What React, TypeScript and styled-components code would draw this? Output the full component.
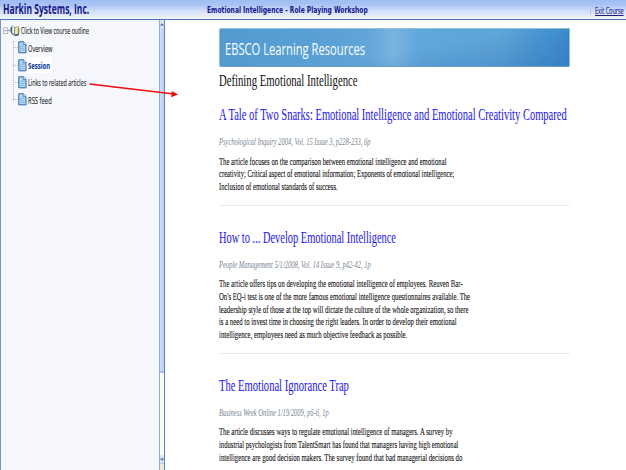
import React, { useLayoutEffect, useRef, useState } from "react";
import styled, { createGlobalStyle } from "styled-components";

const GlobalStyle = createGlobalStyle`
  * { box-sizing: border-box; }
  body { margin: 0; overflow: hidden; background: #fff; }
  h1, h2, h3, p, ul { margin: 0; padding: 0; font-weight: normal; list-style: none; }
`;

const FitBox = styled.span<{ $width: number }>`
  display: block;
  width: ${(p) => p.$width}px;
  white-space: nowrap;
`;

const FitText = styled.span<{ $underline?: boolean }>`
  display: inline-block;
  transform-origin: 0 50%;
  text-decoration: ${(p) => (p.$underline ? "underline" : "none")};
`;

/* Condenses one line of text to the given width. */
function Fit({ width, underline, children }: { width: number; underline?: boolean; children: string }) {
  const ref = useRef<HTMLSpanElement>(null);
  const [scale, setScale] = useState(1);
  useLayoutEffect(() => {
    if (ref.current) setScale(width / ref.current.offsetWidth);
  }, [width, children]);
  return (
    <FitBox $width={width}>
      <FitText ref={ref} $underline={underline} style={{ transform: `scaleX(${scale})` }}>{children}</FitText>
    </FitBox>
  );
}

const Page = styled.div`
  position: relative;
  display: flex;
  flex-direction: column;
  width: 626px;
  height: 470px;
  overflow: hidden;
  background: #fff;
`;

const Header = styled.header`
  display: flex;
  flex: none;
  height: 20px;
  border-bottom: 1px solid #4676b8;
  background: linear-gradient(#9fbcf3 0, #a9c3f4 25%, #d3e0f8 60%, #f1f5fb 100%);
`;

const Company = styled.h1`
  width: 207px;
  padding-left: 2.5px;
  font: bold 13.5px/18px "Open Sans", sans-serif;
  color: #16168c;
`;

const CourseName = styled.div`
  flex: 1;
  font: bold 8.6px/21px "DejaVu Sans", sans-serif;
  color: #16168c;
`;

const ExitArea = styled.div`
  width: 36px;
  height: 12px;
  margin-top: 3px;
  padding-left: 4px;
  border-left: 1px solid #a9cdec;
  font: 8.5px/16px "Open Sans", sans-serif;
  color: #1c1c8c;
  -webkit-text-stroke: 0.15px #1c1c8c;
`;

const Body = styled.div`
  display: flex;
  flex: 1;
  min-height: 0;
`;

const Sidebar = styled.nav`
  width: 159px;
  padding: 2px 0 0 2px;
  border-left: 1px solid #6f96d2;
  background: #f5f7fc;
`;

const Root = styled.div`
  display: flex;
  align-items: center;
  height: 17px;
  font: 8.5px/18px "Open Sans", sans-serif;
  color: #222;
  -webkit-text-stroke: 0.1px #222;
`;

const RootLabel = styled.div`
  margin-left: 1px;
  padding-top: 1px;
`;

const Branches = styled.ul`
  position: relative;
  margin-left: 10px;
  &::before {
    content: "";
    position: absolute;
    left: 0;
    top: 2px;
    height: 60px;
    border-left: 1px dotted #b9bbc0;
  }
`;

const Branch = styled.li<{ $active?: boolean }>`
  display: flex;
  align-items: center;
  height: 17.4px;
  font: ${(p) => (p.$active ? "bold " : "")}8.5px/14px "Open Sans", sans-serif;
  color: ${(p) => (p.$active ? "#173f9c" : "#222")};
  -webkit-text-stroke: 0.1px currentColor;
  &::before {
    content: "";
    width: 5px;
    border-top: 1px dotted #b9bbc0;
  }
`;

const BranchLabel = styled.div<{ $active?: boolean }>`
  padding: 2px 1px 0;
  background: ${(p) => (p.$active ? "#fff" : "transparent")};
`;

const ScrollBar = styled.div`
  display: flex;
  flex-direction: column;
  width: 6px;
  border-left: 1px solid #93add8;
  border-right: 1px solid #5583c8;
  background: #fcfbf5;
`;

const ArrowButton = styled.div<{ $down?: boolean }>`
  display: flex;
  flex: none;
  align-items: center;
  justify-content: center;
  height: 8px;
  background: #dbe5fa;
  margin-top: ${(p) => (p.$down ? "auto" : "0")};
`;

const Thumb = styled.div`
  height: 345px;
  border-bottom: 2px solid #a4bdee;
  background: linear-gradient(90deg, #cfddfb, #bacffa);
`;

const ScrollCorner = styled.div`
  height: 7px;
  border-top: 1px solid #bfc9d4;
  background: #ece9d4;
`;

const Main = styled.main`
  width: 461px;
  padding: 8px 0 0 54px;
  font-family: "Liberation Serif", serif;
`;

const Banner = styled.div`
  width: 351px;
  height: 39px;
  padding-left: 5px;
  border: 1px solid #92bfd9;
  border-bottom-color: #6c9ebc;
  border-radius: 2px 0 0 2px;
  background:
    linear-gradient(170deg, transparent 55%, rgba(40, 105, 175, 0.38) 100%),
    linear-gradient(90deg, #529bd0 0, #5ba1d7 34%, #62a7d9 43%, #79b4df 50%, #60a7dc 57%, #5ea5d9 80%, #3c8dcc 100%);
  font: 17px/39px "Open Sans", sans-serif;
  color: #fff;
`;

const Topic = styled.h2`
  height: 20px;
  margin: 4px 0 14px;
  font-size: 16px;
  line-height: 20px;
  color: #111;
`;

const Article = styled.article`
  width: 351px;
`;

const Divider = styled.div`
  height: 1px;
  margin: 12px 0 22px;
  background: repeating-linear-gradient(90deg, #e4e4e4 0 2px, #f9f9f9 2px 3px);
`;

const Title = styled.h3`
  height: 20px;
  font-size: 16px;
  line-height: 20px;
  color: #1a14ff;
`;

const Citation = styled.p`
  height: 14px;
  margin: 9px 0 6.6px;
  font-size: 11px;
  line-height: 14px;
  font-style: italic;
  color: #778592;
`;

const Summary = styled.p`
  font-size: 11.2px;
  line-height: 12.67px;
  color: #111;
  -webkit-text-stroke: 0.12px #111;
`;

const Pointer = styled.svg`
  position: absolute;
  left: 86px;
  top: 80px;
`;

const DocIcon = () => (
  <svg width="9" height="13" viewBox="0 0 9 13">
    <path d="M.8.8h4.5L8 3.3v8.5H.8z" fill="#b4daf5" stroke="#2c66a0" strokeWidth="1" />
    <path d="M5.2.8v2.8H8" fill="#eef7ff" stroke="#2c66a0" strokeWidth=".7" />
    <path d="M2 5.2h4.6M2 7.3h4.6M2 9.4h4.6" stroke="#74addb" strokeWidth=".8" />
  </svg>
);

const ToggleIcon = () => (
  <svg width="7" height="8" viewBox="0 0 7 8">
    <rect x=".3" y=".8" width="4.4" height="5.8" fill="#fff" stroke="#a4a6aa" strokeWidth=".8" />
    <path d="M1.3 3.7h2.5M4.8 3.7H7" stroke="#666" strokeWidth=".8" />
  </svg>
);

const BookIcon = () => (
  <svg width="10" height="12" viewBox="0 0 10 12">
    <path d="M1.3 1.8Q0 3 .4 5.5q.4 3.7 3 4.6l1.8 1q3.8 0 4-2V3.3" fill="#2d5f91" />
    <path d="M2 .8q1.8.3 2.7 2.2v7.2Q3.6 8.6 2 8.2z" fill="#fffdf2" stroke="#376a98" strokeWidth=".5" />
    <path d="M4.7 3Q5.8 1.5 8.4 1.8v7.3q-2.3-.2-3.7 1.1z" fill="#f2e79d" stroke="#756e3c" strokeWidth=".5" />
  </svg>
);

const Arrow = ({ down }: { down?: boolean }) => (
  <svg width="4" height="3" viewBox="0 0 4 3">
    <path d={down ? "M0 .5h4L2 2.8z" : "M0 2.5h4L2 .3z"} fill="#4668a0" />
  </svg>
);

const branches = [
  { label: "Overview", width: 24.5 },
  { label: "Session", width: 22.5, active: true },
  { label: "Links to related articles", width: 58.5 },
  { label: "RSS feed", width: 23.5 },
];

const articles = [
  {
    title: "A Tale of Two Snarks: Emotional Intelligence and Emotional Creativity Compared",
    width: 348,
    citation: "Psychological Inquiry 2004, Vol. 15 Issue 3, p228-233, 6p",
    citationWidth: 151.5,
    lines: [
      ["The article focuses on the comparison between emotional intelligence and emotional", 227.5],
      ["creativity; Critical aspect of emotional information; Exponents of emotional intelligence;", 235.5],
      ["Inclusion of emotional standards of success.", 119],
    ],
  },
  {
    title: "How to ... Develop Emotional Intelligence",
    width: 177,
    citation: "People Management 5/1/2008, Vol. 14 Issue 9, p42-42, 1p",
    citationWidth: 151.5,
    lines: [
      ["The article offers tips on developing the emotional intelligence of employees. Reuven Bar-", 243.5],
      ["On's EQ-i test is one of the more famous emotional intelligence questionnaires available. The", 251],
      ["leadership style of those at the top will dictate the culture of the whole organization, so there", 249.5],
      ["is a need to invest time in choosing the right leaders. In order to develop their emotional", 237.5],
      ["intelligence, employees need as much objective feedback as possible.", 188.5],
    ],
  },
  {
    title: "The Emotional Ignorance Trap",
    width: 130,
    citation: "Business Week Online 1/19/2009, p6-6, 1p",
    citationWidth: 109.5,
    lines: [
      ["The article discusses ways to regulate emotional intelligence of managers. A survey by", 233.5],
      ["industrial psychologists from TalentSmart has found that managers having high emotional", 239.5],
      ["intelligence are good decision makers. The survey found that bad managerial decisions do", 243.5],
    ],
  },
] as const;

export default function App() {
  return (
    <>
      <GlobalStyle />
      <Page>
        <Header>
          <Company><Fit width={86.5}>Harkin Systems, Inc.</Fit></Company>
          <CourseName><Fit width={160.5}>Emotional Intelligence - Role Playing Workshop</Fit></CourseName>
          <ExitArea><Fit width={29} underline>Exit Course</Fit></ExitArea>
        </Header>
        <Body>
          <Sidebar>
            <Root>
              <ToggleIcon />
              <BookIcon />
              <RootLabel><Fit width={68}>Click to View course outline</Fit></RootLabel>
            </Root>
            <Branches>
              {branches.map((b) => (
                <Branch key={b.label} $active={b.active}>
                  <DocIcon />
                  <BranchLabel $active={b.active}><Fit width={b.width}>{b.label}</Fit></BranchLabel>
                </Branch>
              ))}
            </Branches>
          </Sidebar>
          <ScrollBar>
            <ArrowButton><Arrow /></ArrowButton>
            <Thumb />
            <ArrowButton $down><Arrow down /></ArrowButton>
            <ScrollCorner />
          </ScrollBar>
          <Main>
            <Banner><Fit width={140}>EBSCO Learning Resources</Fit></Banner>
            <Topic><Fit width={138.5}>Defining Emotional Intelligence</Fit></Topic>
            {articles.map((a, i) => (
              <Article key={a.title}>
                <Title><Fit width={a.width}>{a.title}</Fit></Title>
                <Citation><Fit width={a.citationWidth}>{a.citation}</Fit></Citation>
                <Summary>
                  {a.lines.map(([text, width]) => <Fit key={text} width={width}>{text}</Fit>)}
                </Summary>
                {i < articles.length - 1 && <Divider />}
              </Article>
            ))}
          </Main>
        </Body>
        <Pointer width="96" height="20" viewBox="0 0 96 20">
          <path d="M3.5 4L88 13.9" stroke="#f80808" strokeWidth="1.5" />
          <path d="M85.8 10.9L92 14.5L85.2 17.2z" fill="#f80808" />
        </Pointer>
      </Page>
    </>
  );
}
